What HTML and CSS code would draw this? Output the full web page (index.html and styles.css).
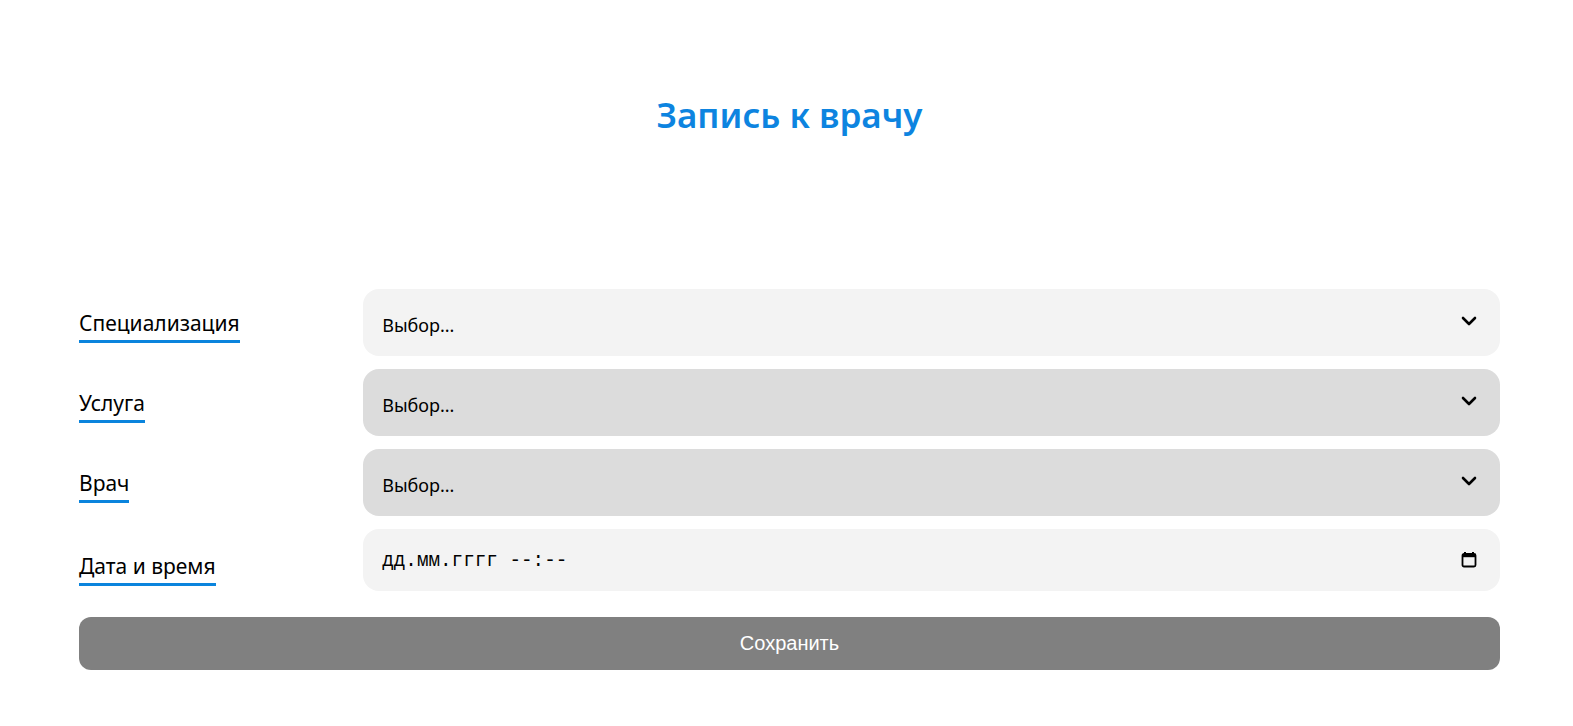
FILE: index.html
```html
<!DOCTYPE html>
<html lang="ru">
<head>
<meta charset="utf-8">
<title>Запись к врачу</title>
<link rel="stylesheet" href="styles.css">
</head>
<body>
<main class="page">
  <h1 class="title">Запись к врачу</h1>
  <form class="form">
    <div class="row">
      <div class="label-cell"><span class="label">Специализация</span></div>
      <div class="field field-light">
        <span class="field-text">Выбор...</span>
        <svg class="chevron" width="16" height="10" viewBox="0 0 16 10"><path d="M2 2 L8 8 L14 2" fill="none" stroke="#000" stroke-width="2.6" stroke-linecap="round" stroke-linejoin="round"/></svg>
      </div>
    </div>
    <div class="row">
      <div class="label-cell"><span class="label">Услуга</span></div>
      <div class="field field-disabled">
        <span class="field-text">Выбор...</span>
        <svg class="chevron" width="16" height="10" viewBox="0 0 16 10"><path d="M2 2 L8 8 L14 2" fill="none" stroke="#000" stroke-width="2.6" stroke-linecap="round" stroke-linejoin="round"/></svg>
      </div>
    </div>
    <div class="row">
      <div class="label-cell"><span class="label">Врач</span></div>
      <div class="field field-disabled">
        <span class="field-text">Выбор...</span>
        <svg class="chevron" width="16" height="10" viewBox="0 0 16 10"><path d="M2 2 L8 8 L14 2" fill="none" stroke="#000" stroke-width="2.6" stroke-linecap="round" stroke-linejoin="round"/></svg>
      </div>
    </div>
    <div class="row row-date">
      <div class="label-cell label-cell-date"><span class="label">Дата и время</span></div>
      <div class="field field-light field-date">
        <span class="date-text">дд.мм.гггг --:--</span>
        <svg class="calendar" width="16" height="17" viewBox="0 0 16 17"><path d="M4 1 V4 M12 1 V4" stroke="#000" stroke-width="2" fill="none"/><rect x="1.5" y="3" width="13" height="12.5" rx="1.5" fill="none" stroke="#000" stroke-width="1.8"/><rect x="1.5" y="3" width="13" height="3.2" fill="#000"/></svg>
      </div>
    </div>
    <button type="button" class="save">Сохранить</button>
  </form>
</main>
</body>
</html>
```
FILE: styles.css
```css
html, body {
  margin: 0;
  padding: 0;
  background: #ffffff;
}

body {
  font-family: "Noto Sans", "Open Sans", sans-serif;
  color: #000;
}

.page {
  margin: 0 73px 0 79px;
}

.title {
  margin: 0;
  padding-top: 93px;
  height: 44px;
  line-height: 44px;
  font-size: 35px;
  font-weight: 600;
  text-align: center;
  color: #0d84e0;
}

.form {
  margin-top: 152px;
  display: flex;
  flex-direction: column;
}

.row {
  display: flex;
  align-items: flex-start;
  margin-bottom: 13px;
}

.row-date {
  margin-bottom: 26px;
}

.label-cell {
  width: 20%;
  flex: none;
  padding-top: 22px;
}

.label-cell-date {
  padding-top: 25px;
}

.label {
  display: inline-block;
  font-size: 21px;
  line-height: 25px;
  padding-bottom: 4px;
  border-bottom: 3px solid #0a84dd;
}

.field {
  flex: 1;
  height: 67px;
  border-radius: 16px;
  display: flex;
  align-items: center;
  justify-content: space-between;
  padding: 0 23px 0 19px;
  box-sizing: border-box;
}

.field-light {
  background: #f3f3f3;
}

.field-disabled {
  background: #dcdcdc;
}

.field-date {
  height: 62px;
  padding-left: 19px;
}

.field-text {
  font-size: 18px;
  padding-top: 4px;
}

.chevron {
  margin-top: -4px;
}

.date-text {
  font-family: "Liberation Mono", "DejaVu Sans Mono", monospace;
  font-size: 19.3px;
  white-space: pre;
  padding-top: 2px;
}

.calendar {
  margin-top: -2px;
}

.save {
  height: 53px;
  width: 100%;
  border: none;
  border-radius: 12px;
  background: #808080;
  color: #ffffff;
  font-family: "Liberation Sans", Arial, sans-serif;
  font-size: 20px;
  padding: 0;
}
```
